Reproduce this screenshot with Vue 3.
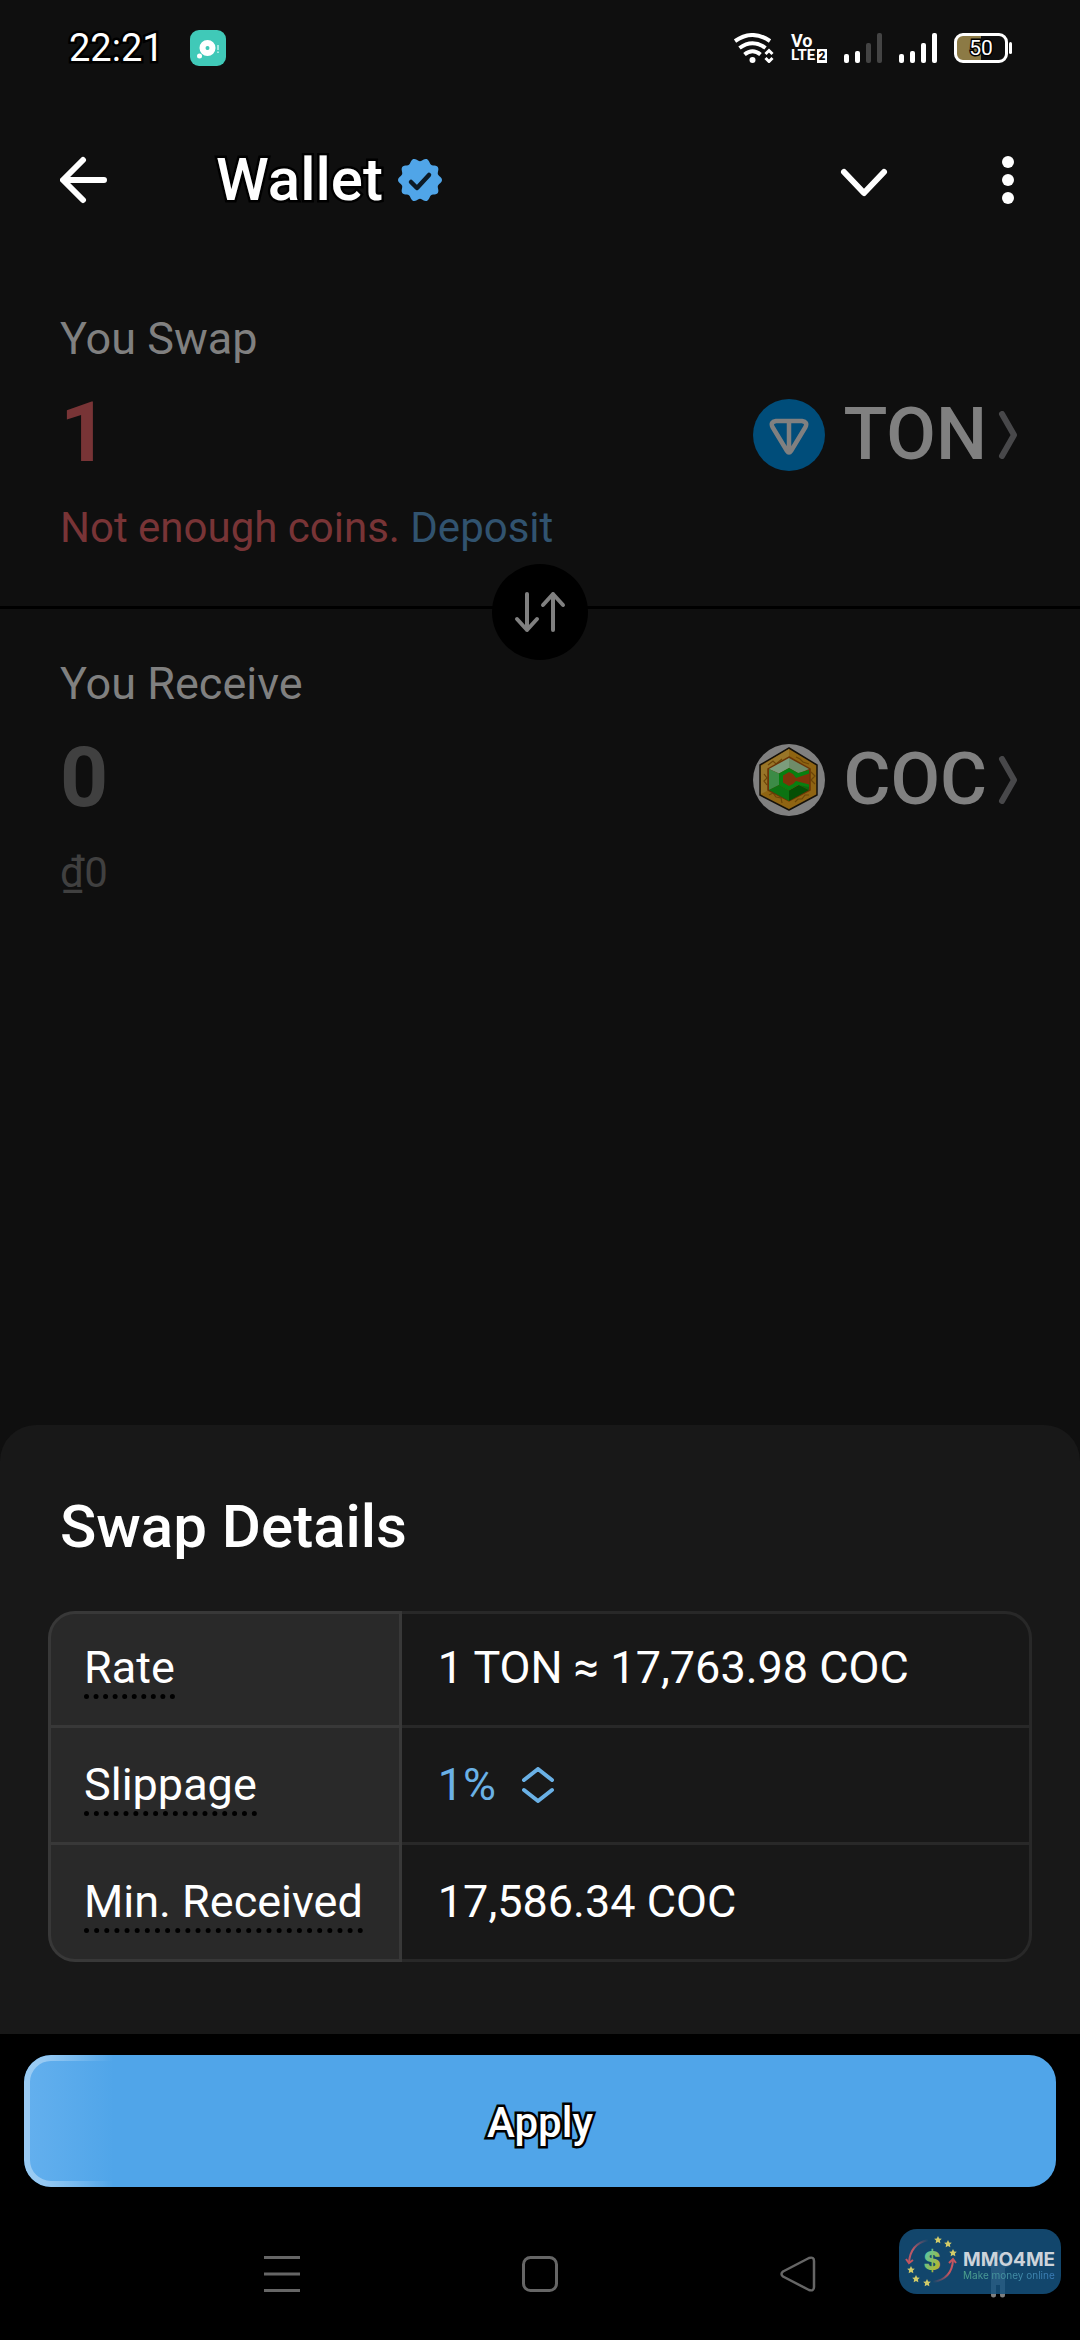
<template>
  <div class="page">
    <div class="status-bar">
      <span class="time outlined">22:21</span>
      <svg class="app-badge" width="36" height="36" viewBox="0 0 36 36">
        <rect width="36" height="36" rx="9" fill="#40c9b8" />
        <circle cx="17.500" cy="18" r="5" fill="none" stroke="#fff" stroke-width="6" />
        <circle cx="17.500" cy="18" r="1.500" fill="#40c9b8" />
        <circle cx="9.500" cy="26" r="2.500" fill="#fff" />
        <path d="M28 15v5M28 21.500v1.500" stroke="#a5e8e0" stroke-width="2" />
      </svg>
      <div class="status-icons">
        <svg width="40" height="30" viewBox="0 0 40 30" fill="none" stroke="#fff" stroke-width="4">
          <path d="M1 8Q18.500 -4 36 8" />
          <path d="M5.500 15Q18.500 5.500 31.500 15" />
          <path d="M10.500 21.500Q18.500 15 26.500 21.500" />
          <circle cx="18.500" cy="27" r="3" fill="#fff" stroke="none" />
          <path d="M31.500 21l3.500-3.500 3.500 3.500M31.500 25l3.500 3.500 3.500-3.500" stroke-width="3" />
        </svg>
        <div class="volte">
          <span>Vo</span>
          <span>LTE<b>2</b></span>
        </div>
        <svg v-for="level in [2, 4]" :key="level" width="38" height="30" viewBox="0 0 38 30">
          <rect
            v-for="(h, i) in [9, 12, 20, 30]"
            :key="h"
            :x="i * 11"
            :y="30 - h"
            width="5"
            :height="h"
            rx="2"
            :fill="i < level ? '#fff' : '#444'"
          />
        </svg>
        <div class="battery">
          <span>50</span>
        </div>
      </div>
    </div>

    <header class="app-bar">
      <button class="icon-button" aria-label="Back">
        <svg width="48" height="48" viewBox="0 0 48 48" fill="none" stroke="#fff" stroke-width="6" stroke-linecap="round" stroke-linejoin="round">
          <path d="M44 24H4M23 4L3 24l20 20" />
        </svg>
      </button>
      <h1 class="title">
        <span class="outlined">Wallet</span>
        <svg width="44" height="44" viewBox="0 0 44 44">
          <path :d="badgePath" fill="#50a5e8" />
          <path d="M13 24l6 6 12-13" fill="none" stroke="#0c1a26" stroke-width="4.500" stroke-linecap="round" stroke-linejoin="round" />
        </svg>
      </h1>
      <button class="icon-button" aria-label="Collapse">
        <svg width="48" height="48" viewBox="0 0 48 48" fill="none" stroke="#fff" stroke-width="6" stroke-linecap="round" stroke-linejoin="round">
          <path d="M4 16l20 21 20-21" />
        </svg>
      </button>
      <button class="icon-button" aria-label="More">
        <svg width="24" height="48" viewBox="0 0 24 48" fill="#fff">
          <circle cx="12" cy="6" r="6" />
          <circle cx="12" cy="24" r="6" />
          <circle cx="12" cy="42" r="6" />
        </svg>
      </button>
    </header>

    <main class="swap">
      <section class="side side-from">
        <label class="side-label" for="send">You Swap</label>
        <div class="side-row">
          <input id="send" v-model="sendAmount" class="amount amount-error" inputmode="decimal" />
          <button class="coin">
            <svg width="72" height="72" viewBox="0 0 72 72">
              <circle cx="36" cy="36" r="36" fill="#004d7a" />
              <path d="M23 22h26q6 1 3.500 6L38 52q-2 3-4 0L19.500 28q-2.500-5 3.500-6zM36 22v30" fill="none" stroke="#808080" stroke-width="4.500" stroke-linejoin="round" />
            </svg>
            <span>TON</span>
            <svg width="24" height="48" viewBox="0 0 24 48" fill="none" stroke="#48484a" stroke-width="6" stroke-linecap="round" stroke-linejoin="round">
              <path d="M6 3l12 21L6 45" />
            </svg>
          </button>
        </div>
        <p class="note note-error">Not enough coins. <a href="#" @click.prevent>Deposit</a></p>
        <button class="flip" aria-label="Switch coins">
          <svg width="60" height="48" viewBox="0 0 60 48" fill="none" stroke="#808080" stroke-width="4" stroke-linecap="round" stroke-linejoin="round">
            <path d="M17 6v36M7 31l10 11 10-11M43 42V6M33 17L43 6l10 11" />
          </svg>
        </button>
      </section>

      <section class="side">
        <label class="side-label" for="receive">You Receive</label>
        <div class="side-row">
          <input id="receive" v-model="receiveAmount" class="amount" inputmode="decimal" />
          <button class="coin">
            <svg width="72" height="72" viewBox="0 0 72 72">
              <circle cx="36" cy="36" r="36" fill="#808080" />
              <path d="M36 4l28 17v30L36 66 7 51V21z" fill="#8f6412" stroke="#15110a" stroke-width="1.500" stroke-linejoin="round" />
              <path d="M36 5v9L16 25v21L8 50V22z" fill="#987528" />
              <path d="M11 30l3 4-3 3 3 4M58 28l4 4-4 4 4 4M15 21l5-4 3 3 6-5M43 13l4 2 3 3 6 2M16 51l4-2 3 4 5 1 1 5M42 58l3-3 4 0 3-4 4 0" fill="none" stroke="#6c4608" stroke-width="1.200" />
              <path d="M36 13l21 12v21L36 57 15 46V25z" fill="#7d3409" stroke="#6b3406" stroke-width="1.500" />
              <path d="M36 14v10l-10 5.500L16 25z" fill="#7c9c7c" />
              <path d="M36 14l20 11-10 4.500L36 24z" fill="#6f8c69" />
              <path d="M16 25l10 4.500V41l-10 5z" fill="#3c8b46" />
              <path d="M16 46l10-5 10 5.500V57z" fill="#0c7312" />
              <path d="M36 57V46.500L46 41l10 5z" fill="#054f05" />
              <path d="M46 41l10 1v4z" fill="#0a6b0d" />
              <path d="M36 24l9 5 11-3v3.500L43 34l-3-4-4-2-6 3.500v7l6 3.500 4-2 3-3 13 3.500V43l-11-2-9 5.500L26 41V29.500z" fill="#078010" />
            </svg>
            <span>COC</span>
            <svg width="24" height="48" viewBox="0 0 24 48" fill="none" stroke="#48484a" stroke-width="6" stroke-linecap="round" stroke-linejoin="round">
              <path d="M6 3l12 21L6 45" />
            </svg>
          </button>
        </div>
        <p class="note">₫0</p>
      </section>
    </main>

    <section class="sheet">
      <h2>Swap Details</h2>
      <table class="details">
        <tbody>
          <tr>
            <th scope="row"><span class="hint">Rate</span></th>
            <td>1 TON ≈ 17,763.98 COC</td>
          </tr>
          <tr>
            <th scope="row"><label class="hint" for="slippage">Slippage</label></th>
            <td>
              <div class="slippage">
                <select id="slippage" v-model="slippage">
                  <option v-for="s in slippages" :key="s" :value="s">{{ s }}</option>
                </select>
                <svg width="36" height="36" viewBox="0 0 36 36" fill="none" stroke="#6ab1e6" stroke-width="4" stroke-linecap="round" stroke-linejoin="round">
                  <path d="M4 13L18 2l14 11M4 23l14 11 14-11" />
                </svg>
              </div>
            </td>
          </tr>
          <tr>
            <th scope="row"><span class="hint">Min. Received</span></th>
            <td>17,586.34 COC</td>
          </tr>
        </tbody>
      </table>
    </section>

    <div class="action">
      <button class="apply"><span class="outlined">Apply</span></button>
    </div>

    <nav class="system-nav">
      <div class="nav-keys">
        <button class="icon-button" aria-label="Recent apps">
          <svg width="36" height="36" viewBox="0 0 36 36" stroke="#666" stroke-width="3">
            <path d="M0 1.500h36M0 18h36M0 34.500h36" />
          </svg>
        </button>
        <button class="icon-button" aria-label="Home">
          <svg width="36" height="36" viewBox="0 0 36 36" fill="none" stroke="#666" stroke-width="3">
            <rect x="1.500" y="1.500" width="33" height="33" rx="7" />
          </svg>
        </button>
        <button class="icon-button" aria-label="Go back">
          <svg width="36" height="36" viewBox="0 0 36 36" fill="none" stroke="#666" stroke-width="2.500" stroke-linejoin="round">
            <path d="M3 15.500L29 2q5-1.500 5 3v26q0 4.500-5 3L3 20.500q-3-2.500 0-5z" />
          </svg>
        </button>
      </div>
      <button class="icon-button accessibility" aria-label="Accessibility">
        <svg width="30" height="48" viewBox="0 0 30 48" fill="#808080">
          <circle cx="15" cy="5" r="5" />
          <path d="M3 11q12 3 24 0 3 1 1 4l-6 3v27a2.500 2.500 0 0 1-5 0V35h-4v10a2.500 2.500 0 0 1-5 0V18l-6-3q-2-3 1-4z" />
        </svg>
      </button>
      <div class="brand">
        <svg width="64" height="65" viewBox="0 0 64 65">
          <defs>
            <linearGradient id="dollar" x1="0" y1="0" x2="1" y2="1">
              <stop offset="0.200" stop-color="#5cc5a0" />
              <stop offset="0.800" stop-color="#b3b62c" />
            </linearGradient>
            <linearGradient id="arcLeft" x1="1" y1="0" x2="0" y2="1">
              <stop offset="0" stop-color="#14486c" />
              <stop offset="0.600" stop-color="#b95866" />
            </linearGradient>
            <linearGradient id="arcRight" x1="0" y1="1" x2="1" y2="0">
              <stop offset="0" stop-color="#14486c" />
              <stop offset="0.600" stop-color="#c45560" />
            </linearGradient>
          </defs>
          <path d="M29 11Q11 15 10 34" fill="none" stroke="url(#arcLeft)" stroke-width="2" />
          <path d="M7 30l3 4 4-3" fill="none" stroke="#c45560" stroke-width="2" />
          <path d="M34 53Q53 50 54 31" fill="none" stroke="url(#arcRight)" stroke-width="2" />
          <path d="M50 34l4-4 3 4" fill="none" stroke="#c45560" stroke-width="2" />
          <path v-for="(s, i) in stars" :key="i" :d="starPath(s[0], s[1])" fill="#d2cb69" />
          <text class="dollar" x="33" y="41" text-anchor="middle" fill="url(#dollar)">$</text>
        </svg>
        <div class="brand-text">
          <strong>MMO4ME</strong>
          <span>Make money online</span>
        </div>
      </div>
    </nav>
  </div>
</template>

<script setup>
import { ref } from 'vue';

const sendAmount = ref('1');
const receiveAmount = ref('0');
const slippage = ref('1%');
const slippages = ['1%', '3%', '5%'];

const stars = [[39, 11], [49, 15], [54, 24], [12, 41], [17, 50], [28, 54]];

// five-pointed star around (cx, cy)
const starPath = (cx, cy) => {
  const points = [];
  for (let i = 0; i < 10; i++) {
    const r = i % 2 ? 2 : 4;
    const a = (Math.PI / 5) * i - Math.PI / 2;
    points.push(`${cx + r * Math.cos(a)} ${cy + r * Math.sin(a)}`);
  }
  return `M${points.join('L')}Z`;
};

// wavy outline of the verified badge, 10 petals
const makeBadge = () => {
  const points = [];
  for (let i = 0; i < 120; i++) {
    const a = (Math.PI / 60) * i;
    const r = 20.4 - 1.6 * Math.cos(a * 10);
    points.push(`${22 + r * Math.sin(a)} ${22 - r * Math.cos(a)}`);
  }
  return `M${points.join('L')}Z`;
};
const badgePath = makeBadge();
</script>

<style>
body {
  margin: 0;
  background-color: #000;
}
</style>

<style scoped>
.page {
  min-height: 100vh;
  display: flex;
  flex-direction: column;
  background-color: #0f0f0f;
  color: #fff;
  font-family: Roboto, "Liberation Sans", sans-serif;
}

button {
  padding: 0;
  border: none;
  background: none;
  color: inherit;
  font-family: inherit;
  cursor: pointer;
}

svg {
  display: block;
  flex-shrink: 0;
}

.outlined {
  -webkit-text-stroke: 5px #000;
  paint-order: stroke fill;
}

.status-bar {
  height: 96px;
  padding: 0 69px;
  display: flex;
  align-items: center;
}

.time {
  font-size: 38px;
  line-height: 48px;
}

.app-badge {
  margin-left: 26px;
}

.status-icons {
  margin-left: auto;
  display: flex;
  align-items: center;
  gap: 17px;
}

.volte {
  width: 36px;
  display: flex;
  flex-direction: column;
  font-family: "Liberation Sans Narrow", Roboto, sans-serif;
  font-weight: 700;
}

.volte span {
  display: flex;
  align-items: center;
  font-size: 18px;
  line-height: 15px;
}

.volte span:last-child {
  font-size: 15px;
}

.volte b {
  width: 10px;
  margin-left: 2px;
  background-color: #fff;
  color: #0f0f0f;
  font-size: 12px;
  line-height: 14px;
  text-align: center;
}

.battery {
  position: relative;
  box-sizing: border-box;
  width: 54px;
  height: 30px;
  margin-right: 3px;
  border: 3px solid #fff;
  border-radius: 9px;
  background: linear-gradient(90deg, #8c7a45 50%, #0f0f0f 50%);
  text-align: center;
  font-size: 21px;
  line-height: 24px;
}

.battery span {
  -webkit-text-stroke: 3px #000;
  paint-order: stroke fill;
}

.battery::after {
  content: "";
  position: absolute;
  right: -7px;
  top: 6px;
  width: 3px;
  height: 12px;
  border-radius: 2px;
  background-color: #fff;
}

.app-bar {
  height: 168px;
  padding: 0 60px;
  display: flex;
  align-items: center;
  gap: 108px;
}

.title {
  flex: 1;
  margin: 0;
  display: flex;
  align-items: center;
  gap: 15px;
  font-size: 60px;
  font-weight: 500;
  line-height: 72px;
}

.swap {
  flex: 1;
}

.side {
  position: relative;
  padding: 48px 60px 54px;
}

.side-from {
  border-bottom: 3px solid #000;
}

.side-label {
  display: block;
  margin-bottom: 18px;
  color: #808080;
  font-size: 45px;
  line-height: 54px;
}

.side-row {
  display: flex;
  align-items: flex-end;
  gap: 24px;
  margin-bottom: 24px;
}

.amount {
  flex: 1;
  min-width: 0;
  height: 96px;
  padding: 0;
  border: none;
  outline: none;
  background: none;
  color: #404040;
  font-family: inherit;
  font-size: 84px;
  font-weight: 700;
}

.amount-error {
  color: #783436;
}

.coin {
  height: 90px;
  display: flex;
  align-items: center;
  color: #808080;
  font-size: 72px;
  font-weight: 500;
  line-height: 84px;
}

.coin span {
  margin: 0 9px 0 18px;
}

.note {
  margin: 0;
  color: #404040;
  font-size: 42px;
  line-height: 48px;
}

.note-error {
  color: #783436;
}

.note a {
  color: #31536f;
  text-decoration: none;
}

.flip {
  position: absolute;
  bottom: -54px;
  left: 50%;
  width: 96px;
  height: 96px;
  margin-left: -48px;
  display: flex;
  align-items: center;
  justify-content: center;
  border-radius: 50%;
  background-color: #000;
}

.sheet {
  padding: 66px 48px 72px;
  border-radius: 36px 36px 0 0;
  background-color: #181818;
}

.sheet h2 {
  margin: 0 12px 48px;
  font-size: 60px;
  font-weight: 500;
  line-height: 72px;
}

.details {
  width: 100%;
  border-spacing: 0;
  font-size: 45px;
  line-height: 54px;
}

.details th,
.details td {
  box-sizing: border-box;
  height: 117px;
  padding: 0 36px;
  border: 0 solid rgba(255, 255, 255, 0.07);
  border-width: 0 3px 3px 0;
  font-weight: 400;
  text-align: left;
  vertical-align: middle;
}

.details th {
  width: 1px;
  padding-left: 33px;
  border-left-width: 3px;
  background-color: #292929;
  white-space: nowrap;
}

/* the extra top border must not push the text down */
.details tr:first-child > * {
  padding-bottom: 3px;
  border-top-width: 3px;
}

.details tr:first-child th {
  border-top-left-radius: 27px;
}

.details tr:first-child td {
  border-top-right-radius: 27px;
}

.details tr:last-child th {
  border-bottom-left-radius: 27px;
}

.details tr:last-child td {
  border-bottom-right-radius: 27px;
}

.hint {
  border-bottom: 5px dotted #000;
}

.slippage {
  display: flex;
  align-items: center;
  gap: 24px;
}

.slippage select {
  appearance: none;
  field-sizing: content;
  padding: 0;
  border: none;
  outline: none;
  background: none;
  color: #6ab1e6;
  font-family: inherit;
  font-size: 45px;
  line-height: 54px;
}

.action {
  padding: 21px 24px 0;
  background-color: #000;
}

.apply {
  position: relative;
  width: 100%;
  height: 132px;
  padding-top: 3px;
  display: block;
  border-radius: 27px;
  background: linear-gradient(90deg, #64b0ee, #50a5e9 90px);
  font-size: 42px;
  font-weight: 500;
}

/* highlight running along the left edge */
.apply::before {
  content: "";
  position: absolute;
  inset: 0;
  border: 6px solid rgba(255, 255, 255, 0.35);
  border-radius: 27px;
  mask-image: linear-gradient(90deg, #000 20px, transparent 90px);
}

.system-nav {
  position: relative;
  height: 153px;
  display: flex;
  align-items: center;
  justify-content: center;
  background-color: #000;
}

.nav-keys {
  display: flex;
  gap: 222px;
  padding-top: 21px;
}

.accessibility {
  position: absolute;
  right: 67px;
  bottom: 42px;
}

.brand {
  position: absolute;
  right: 19px;
  bottom: 46px;
  width: 162px;
  height: 65px;
  display: flex;
  align-items: center;
  border-radius: 18px;
  background-color: rgba(21, 82, 127, 0.85);
}

.brand-text {
  display: flex;
  flex-direction: column;
  padding-top: 8px;
  font-family: Inter, sans-serif;
}

.brand-text strong {
  color: #ccd3da;
  font-size: 19px;
  font-weight: 700;
  line-height: 18px;
}

.brand-text span {
  background: linear-gradient(90deg, #4fa58c, #3a7cba);
  background-clip: text;
  color: transparent;
  font-size: 10px;
  line-height: 12px;
  white-space: nowrap;
}

.dollar {
  font-family: Inter, sans-serif;
  font-size: 26px;
  font-weight: 800;
}
</style>
